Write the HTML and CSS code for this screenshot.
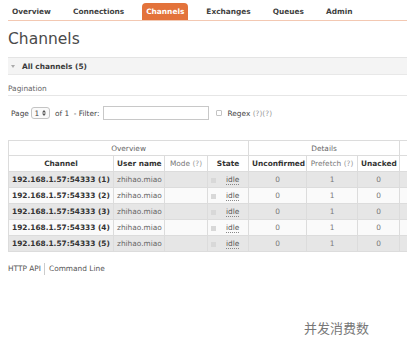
FILE: index.html
```html
<!DOCTYPE html>
<html lang="en">
<head>
  <meta charset="UTF-8">
  <meta name="viewport" content="width=device-width, initial-scale=1.0">
  <title>Channels</title>
  <link rel="stylesheet" href="styles.css">
</head>
<body>
  <div class="page">
    <ul class="tabs">
      <li>Overview</li>
      <li>Connections</li>
      <li class="active">Channels</li>
      <li>Exchanges</li>
      <li>Queues</li>
      <li>Admin</li>
    </ul>

    <h1>Channels</h1>

    <div class="section">
      <h2><span class="arrow"></span>All channels (5)</h2>
      <h3>Pagination</h3>
      <div class="filter">
        <span>Page</span>
        <span class="select">1
          <svg width="4" height="6" viewBox="0 0 4 6"><path d="M0 2.4 2 0 4 2.4Z M0 3.6 2 6 4 3.6Z" fill="#555"/></svg>
        </span>
        <span class="of">of 1 &nbsp;- Filter:</span>
        <span class="text-input"></span>
        <span class="checkbox"></span>
        <span class="regex">Regex <span class="help">(?)(?)</span></span>
      </div>

      <table class="list">
        <colgroup>
          <col style="width: 105px">
          <col style="width: 51px">
          <col style="width: 43px">
          <col style="width: 41px">
          <col style="width: 58px">
          <col style="width: 51px">
          <col style="width: 42px">
          <col style="width: 60px">
          <col style="width: 60px">
        </colgroup>
        <thead>
          <tr class="group">
            <th colspan="4">Overview</th>
            <th colspan="3">Details</th>
            <th colspan="2">Message rates</th>
          </tr>
          <tr>
            <th>Channel</th>
            <th>User name</th>
            <th class="plain">Mode <span class="help">(?)</span></th>
            <th>State</th>
            <th>Unconfirmed</th>
            <th class="plain">Prefetch <span class="help">(?)</span></th>
            <th>Unacked</th>
            <th>publish</th>
            <th>confirm</th>
          </tr>
        </thead>
        <tbody>
          <tr class="alt">
            <td class="name">192.168.1.57:54333 (1)</td>
            <td class="user">zhihao.miao</td>
            <td></td>
            <td class="state"><span class="dot"></span><abbr>idle</abbr></td>
            <td class="num">0</td>
            <td class="num">1</td>
            <td class="num">0</td>
            <td></td>
            <td></td>
          </tr>
          <tr>
            <td class="name">192.168.1.57:54333 (2)</td>
            <td class="user">zhihao.miao</td>
            <td></td>
            <td class="state"><span class="dot"></span><abbr>idle</abbr></td>
            <td class="num">0</td>
            <td class="num">1</td>
            <td class="num">0</td>
            <td></td>
            <td></td>
          </tr>
          <tr class="alt">
            <td class="name">192.168.1.57:54333 (3)</td>
            <td class="user">zhihao.miao</td>
            <td></td>
            <td class="state"><span class="dot"></span><abbr>idle</abbr></td>
            <td class="num">0</td>
            <td class="num">1</td>
            <td class="num">0</td>
            <td></td>
            <td></td>
          </tr>
          <tr>
            <td class="name">192.168.1.57:54333 (4)</td>
            <td class="user">zhihao.miao</td>
            <td></td>
            <td class="state"><span class="dot"></span><abbr>idle</abbr></td>
            <td class="num">0</td>
            <td class="num">1</td>
            <td class="num">0</td>
            <td></td>
            <td></td>
          </tr>
          <tr class="alt">
            <td class="name">192.168.1.57:54333 (5)</td>
            <td class="user">zhihao.miao</td>
            <td></td>
            <td class="state"><span class="dot"></span><abbr>idle</abbr></td>
            <td class="num">0</td>
            <td class="num">1</td>
            <td class="num">0</td>
            <td></td>
            <td></td>
          </tr>
        </tbody>
      </table>
    </div>

    <p class="footer"><span>HTTP API</span><span class="sep">Command Line</span></p>

    <p class="caption">并发消费数</p>
  </div>
</body>
</html>
```

FILE: styles.css
```css
body {
  margin: 0;
  font-family: "DejaVu Sans", Verdana, sans-serif;
  font-size: 7.4px;
  color: #444;
  background-color: #fff;
  overflow: hidden;
}

.page {
  padding: 3px 0 0 8px;
  width: 399px;
  overflow: hidden;
}

/* top navigation */
.tabs {
  display: flex;
  gap: 14px;
  list-style: none;
  margin: 0;
  padding: 0;
  height: 17px;
  border-bottom: 1px solid #f3c8b2;
}

.tabs li {
  padding: 0 4px;
  line-height: 17px;
  font-weight: bold;
  color: #3f3f3f;
  border-radius: 4px 4px 0 0;
}

.tabs li.active {
  background-color: #e3733b;
  color: #fff;
}

h1 {
  margin: 8px 0 0;
  height: 20px;
  font-size: 15.5px;
  line-height: 20px;
  font-weight: normal;
  color: #4a4a4a;
}

/* collapsible section */
.section {
  margin-top: 8px;
}

.section h2 {
  display: flex;
  align-items: center;
  margin: 0;
  height: 16px;
  padding-left: 3px;
  font-size: 7.4px;
  font-weight: bold;
  color: #3a3a3a;
  background-color: #f4f4f4;
  border-top: 1px solid #e4e4e4;
  border-bottom: 1px solid #e8e8e8;
}

.arrow {
  width: 0;
  height: 0;
  margin-right: 7px;
  border-left: 2.5px solid transparent;
  border-right: 2.5px solid transparent;
  border-top: 3px solid #aaa;
}

.section h3 {
  margin: 8px 0 0;
  line-height: 12px;
  font-size: 7.4px;
  font-weight: normal;
  color: #666;
  border-bottom: 1px solid #e6e6e6;
}

.filter {
  display: flex;
  align-items: center;
  height: 14px;
  margin-top: 10px;
  padding-left: 3px;
  color: #444;
}

.select {
  display: flex;
  align-items: center;
  justify-content: center;
  gap: 3px;
  box-sizing: border-box;
  width: 19px;
  height: 12px;
  margin-left: 2px;
  border: 1px solid #c4c4c4;
  border-radius: 3px;
  background-color: #fafafa;
}

.of {
  margin-left: 5px;
}

.text-input {
  box-sizing: border-box;
  width: 106px;
  height: 14px;
  margin-left: 4px;
  border: 1px solid #c8c8c8;
  background-color: #fff;
}

.checkbox {
  box-sizing: border-box;
  width: 6px;
  height: 6px;
  margin-left: 7px;
  border: 1px solid #c4c4c4;
  border-radius: 1px;
}

.regex {
  margin-left: 5px;
}

.help {
  color: #999;
  font-weight: normal;
}

/* channel list */
.list {
  margin-top: 20px;
  border-collapse: collapse;
  table-layout: fixed;
  width: 511px;
}

.list th,
.list td {
  border: 1px solid #dcdcdc;
  padding: 0 3px;
  white-space: nowrap;
  overflow: hidden;
}

.list th {
  height: 15px;
  font-weight: bold;
  color: #333;
  text-align: center;
  background-color: #fff;
}

.list th.plain {
  font-weight: normal;
  color: #777;
}

.list tr.group th {
  height: 14px;
  font-weight: normal;
  color: #666;
}

.list td {
  height: 15px;
  color: #666;
  background-color: #fafafa;
}

.list tr.alt td {
  background-color: #e6e6e6;
}

.list td.name {
  font-weight: bold;
  color: #333;
}

.list td.num {
  text-align: center;
  color: #777;
}

.state .dot {
  display: inline-block;
  width: 5px;
  height: 5px;
  margin-right: 10px;
  background-color: #d8d8d8;
  vertical-align: -0.5px;
}

.state abbr {
  text-decoration: none;
  border-bottom: 1px dotted #888;
  color: #555;
}

.footer {
  display: flex;
  margin: 11px 0 0;
  line-height: 12px;
  color: #555;
}

.footer .sep {
  margin-left: 3px;
  padding-left: 4px;
  border-left: 1px solid #ccc;
}

.caption {
  margin: 45px 0 0 296px;
  line-height: 16px;
  font-family: "Noto Sans CJK SC", sans-serif;
  font-size: 13px;
  color: #777;
}
```
